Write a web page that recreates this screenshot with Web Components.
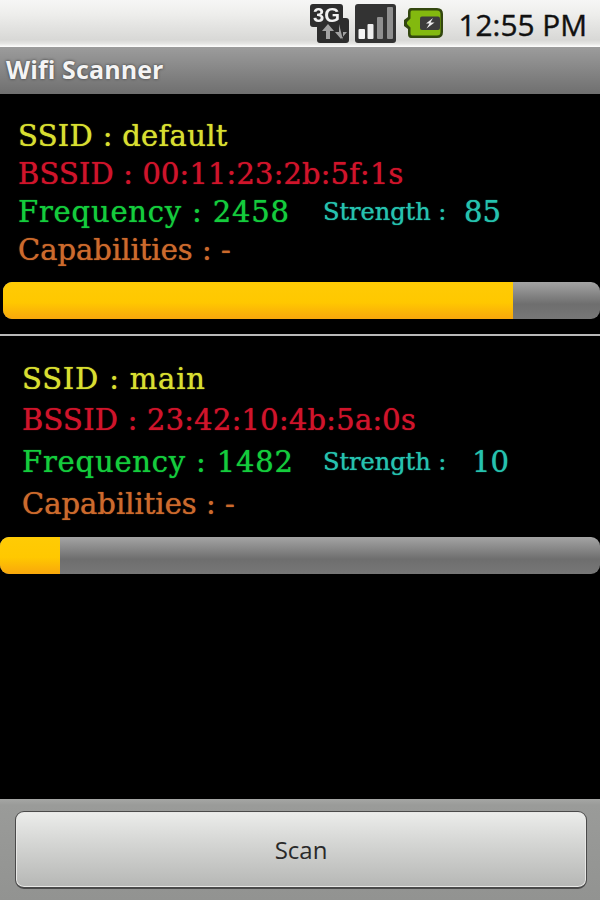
<!DOCTYPE html>
<html><head><meta charset="utf-8"><style>
html,body{margin:0;padding:0;background:#000;}
body{width:600px;height:900px;display:flex;flex-direction:column;overflow:hidden;font-family:"DejaVu Serif",serif;}
</style></head><body>
<status-bar></status-bar>
<title-bar>Wifi Scanner</title-bar>
<main-list>
<wifi-entry ssid="default" bssid="00:11:23:2b:5f:1s" freq="2458" strength="85" variant="a"></wifi-entry>
<list-divider></list-divider>
<wifi-entry ssid="main" bssid="23:42:10:4b:5a:0s" freq="1482" strength="10" variant="b"></wifi-entry>
</main-list>
<button-panel><scan-button>Scan</scan-button></button-panel>
<script>
function def(name, html, init){
  customElements.define(name, class extends HTMLElement{
    constructor(){super();this.attachShadow({mode:'open'}).innerHTML=html;}
    connectedCallback(){ if(init) init(this); }
  });
}
def('status-bar',`<style>
:host{display:flex;height:47px;flex:none;align-items:flex-start;justify-content:flex-end;box-sizing:border-box;padding-right:13px;
background:linear-gradient(#f6f6f5 0,#eeeeec 30%,#d8d8d6 85%,#e6e6e4 93%,#fff 100%);}
svg{display:block;flex:none;filter:blur(.4px)}
.time{font:500 29.8px/47px "Open Sans",sans-serif;color:#111;-webkit-text-stroke:.4px #111;margin-left:16px;white-space:nowrap;margin-top:1px}
</style>
<svg width="39" height="39" viewBox="0 0 39 39" style="margin-right:6px;margin-top:4px">
<path d="M3 0h27q3 0 3 3v11h3q3 0 3 3v19q0 3-3 3H10q-3 0-3-3v-13H3q-3 0-3-3V3q0-3 3-3z" fill="#2d2d2d"/>
<text x="3" y="18" font-family="Liberation Sans" font-weight="700" font-size="20" fill="#f2f2f2" textLength="27" lengthAdjust="spacingAndGlyphs">3G</text>
<path d="M16 35v-8h-4l6-7 6 7h-4v8z" fill="#a2a2a2"/><path d="M29 20v8h-4l6 7 6-7h-4v8z" fill="#a2a2a2"/>
</svg>
<svg width="41" height="39" viewBox="0 0 41 39" style="margin-right:8px;margin-top:4px">
<rect width="41" height="39" rx="3" fill="#333"/>
<rect x="3.500" y="25" width="6.500" height="10" rx="1" fill="#f4f4f4"/>
<rect x="12.500" y="20" width="6" height="15" rx="1" fill="#eee"/>
<rect x="22" y="13" width="6" height="22" rx="1" fill="#8f8f8f"/>
<rect x="32" y="3" width="6" height="32" rx="1" fill="#8f8f8f"/>
</svg>
<svg width="39" height="30" viewBox="0 0 39 30" style="margin-top:8px">
<path d="M7 0h26q6 0 6 6v18q0 6-6 6H7q-3 0-3-4v-5l-4-3V12l4-3V4q0-4 3-4z" fill="#33470f"/>
<path d="M8 2.500h25q3.500 0 3.500 3.500v18q0 3.500-3.500 3.500H8q-1.500 0-1.500-2v-6L3 16v-2l3.500-3.500v-6q0-2 1.500-2z" fill="#83b90f"/>
<rect x="16" y="8.500" width="20" height="13.500" rx="2" fill="#3c3c3c"/>
<path d="M29 10l-7 5.500h3.500l-3 5 8-6h-4z" fill="#eee"/>
</svg>
<span class="time">12:55 PM</span>`);
def('title-bar',`<style>
:host{display:flex;align-items:center;height:47px;flex:none;box-sizing:border-box;padding:0 0 3px 6px;
background:linear-gradient(#9c9c9c,#6f6f6f);color:#f4f4f4;font:700 25px "Open Sans",sans-serif;text-shadow:0 0 3px #333;letter-spacing:.1px}
</style><slot></slot>`);
def('main-list',`<style>:host{display:flex;flex-direction:column;flex:1;min-height:0;background:#000}</style><slot></slot>`);
def('list-divider',`<style>:host{display:block;height:2px;background:#b8b8b8;margin-top:15px;flex:none}</style>`);
def('signal-bar',`<style>
:host{display:block;height:37px;border-radius:9px;overflow:hidden;background:linear-gradient(#a4a4a4,#6e6e6e 60%,#777);flex:none}
.f{height:100%;width:var(--v);background:linear-gradient(#ffcb05,#ffc800 55%,#f8a70c);}
</style><div class="f"></div>`);
def('wifi-entry',`<style>
:host{display:block;flex:none}
.text{display:flex;flex-direction:column;font-size:29px;white-space:pre;text-shadow:0 0 1px currentColor}
.row{height:var(--lh);line-height:var(--lh);display:block;overflow:visible}
.ssid{color:#d8df30;letter-spacing:var(--ls1)}.bssid{color:#d0142a;letter-spacing:var(--ls2)}.freq{color:#14cc3c;display:flex}.cap{color:#cc6a2c}
.f{width:var(--fw);flex:none;letter-spacing:.8px}
.s{color:#25c2ae;font-size:24px;width:var(--sw);flex:none}
.v{color:#25c2ae;font-size:29px}
signal-bar{margin-top:var(--bt);margin-left:var(--bl)}
</style>
<div class="text">
<div class="row ssid">SSID : <span id="a"></span></div>
<div class="row bssid">BSSID : <span id="b"></span></div>
<div class="row freq"><span class="f">Frequency : <span id="c"></span></span><span class="s">Strength :</span><span class="v" id="d"></span></div>
<div class="row cap">Capabilities : -</div>
</div>
<signal-bar id="e"></signal-bar>`, el=>{
  const r=el.shadowRoot, g=i=>r.getElementById(i);
  g('a').textContent=el.getAttribute('ssid');
  g('b').textContent=el.getAttribute('bssid');
  g('c').textContent=el.getAttribute('freq');
  g('d').textContent=el.getAttribute('strength');
  const a=el.getAttribute('variant')==='a';
  const st=el.style;
  st.setProperty('--lh',a?'38px':'41.7px');
  st.setProperty('--fw',a?'305px':'301px');
  st.setProperty('--sw',a?'141px':'149px');
  st.setProperty('--bt',a?'13px':'11.5px');
  st.setProperty('--bl',a?'3px':'0');
  st.setProperty('--ls1',a?'.3px':'.8px');
  st.setProperty('--ls2',a?'.12px':'.2px');
  st.paddingTop=a?'23px':'22.5px';
  r.querySelector('.text').style.paddingLeft=a?'18px':'22px';
  g('e').style.setProperty('--v',a?'85.4%':'10%');
});
def('button-panel',`<style>
:host{display:flex;flex:none;height:101px;box-sizing:border-box;padding:12px 13px 11px 15px;background:linear-gradient(#a5a6a4 0,#9a9b99 6%,#929391)}
</style><slot></slot>`);
def('scan-button',`<style>
:host{display:flex;flex:1;align-items:center;justify-content:center;border-radius:9px;box-sizing:border-box;
background:linear-gradient(#ecedeb,#d8d9d7 35%,#b6b7b5);border:1.500px solid #4a4a4a;border-bottom-width:2px;box-shadow:inset 0 0 0 1px #e8e8e6;
color:#2a2a2a;font:400 24px "Open Sans",sans-serif;padding-bottom:1px}
</style><slot></slot>`);
</script>
</body></html>
